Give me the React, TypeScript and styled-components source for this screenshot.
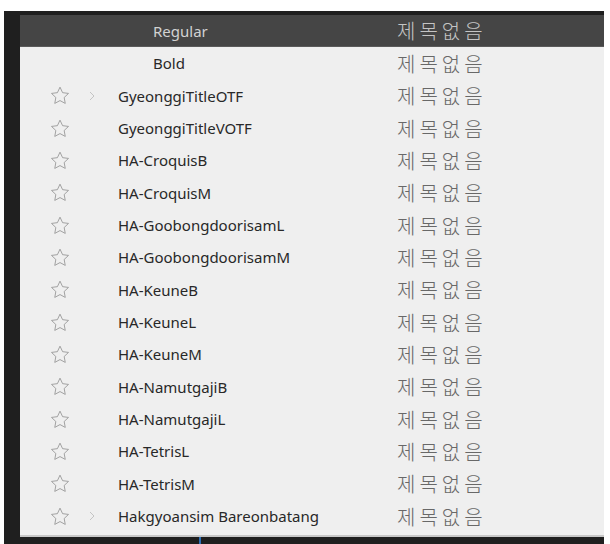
import React from "react";
import styled, { createGlobalStyle } from "styled-components";

const Global = createGlobalStyle`
  html, body { margin: 0; padding: 0; background: #ffffff; }
  body { width: 610px; height: 544px; overflow: hidden; }
`;

const Frame = styled.div`
  margin: 11px 0 0 4px;
  width: 600px;
  height: 533px;
  background: #1f1f1f;
  padding: 4px 0 0 16px;
  box-sizing: border-box;
  display: flex;
  flex-direction: column;
`;

const Panel = styled.div`
  width: 584px;
  background: #efefef;
  padding-bottom: 3px;
  border-bottom: 2px solid #c8c8c8;
  display: flex;
  flex-direction: column;
`;

const BottomStrip = styled.div`
  flex: 1;
  display: flex;
  padding-left: 179px;
`;

const BlueMark = styled.div`
  width: 2px;
  background: #2d6fb8;
`;

const Row = styled.div<{ $active?: boolean }>`
  height: 32.33px;
  box-sizing: border-box;
  display: grid;
  grid-template-columns: 30px 20px 48px 279px 1fr;
  align-items: center;
  background: ${(p) => (p.$active ? "#454545" : "transparent")};
  border-bottom: ${(p) => (p.$active ? "1px solid #5a5a5a" : "none")};
`;

const StarCell = styled.div`
  grid-column: 2;
  display: flex;
  align-items: center;
  justify-content: center;
  height: 20px;
`;

const ChevronCell = styled.div`
  grid-column: 3;
  display: flex;
  align-items: center;
  padding-left: 19px;
`;

const Name = styled.div<{ $active?: boolean; $sub?: boolean }>`
  grid-column: 4;
  padding-left: ${(p) => (p.$sub ? "35px" : "0")};
  font-family: "Noto Sans", "Open Sans", sans-serif;
  font-size: 15px;
  font-weight: 400;
  color: ${(p) => (p.$active ? "#d2d2d2" : "#282828")};
  white-space: nowrap;
`;

const Sample = styled.div<{ $active?: boolean }>`
  grid-column: 5;
  font-family: "Noto Sans CJK KR", sans-serif;
  font-size: 20px;
  font-weight: 300;
  letter-spacing: 4px;
  color: ${(p) => (p.$active ? "#c4c4c4" : "#686868")};
  white-space: nowrap;
`;

const Star = () => (
  <svg width="22" height="21" viewBox="0 0 24 23" fill="none">
    <path
      d="M12 1.5l3.1 6.6 7.1.9-5.2 4.9 1.3 7.1L12 17.6l-6.3 3.4 1.3-7.1L1.8 9l7.1-.9z"
      stroke="#929292"
      strokeWidth="1"
      strokeLinejoin="round"
    />
  </svg>
);

const Chevron = () => (
  <svg width="6" height="10" viewBox="0 0 6 10" fill="none">
    <path d="M1 1l4 4-4 4" stroke="#c4c4c4" strokeWidth="1" />
  </svg>
);

type Item = { name: string; sub?: boolean; active?: boolean; star?: boolean; chevron?: boolean };

const items: Item[] = [
  { name: "Regular", sub: true, active: true },
  { name: "Bold", sub: true },
  { name: "GyeonggiTitleOTF", star: true, chevron: true },
  { name: "GyeonggiTitleVOTF", star: true },
  { name: "HA-CroquisB", star: true },
  { name: "HA-CroquisM", star: true },
  { name: "HA-GoobongdoorisamL", star: true },
  { name: "HA-GoobongdoorisamM", star: true },
  { name: "HA-KeuneB", star: true },
  { name: "HA-KeuneL", star: true },
  { name: "HA-KeuneM", star: true },
  { name: "HA-NamutgajiB", star: true },
  { name: "HA-NamutgajiL", star: true },
  { name: "HA-TetrisL", star: true },
  { name: "HA-TetrisM", star: true },
  { name: "Hakgyoansim Bareonbatang", star: true, chevron: true },
];

export default function App() {
  return (
    <>
      <Global />
      <Frame>
        <Panel>
          {items.map((it) => (
            <Row key={it.name} $active={it.active}>
              {it.star && (
                <StarCell>
                  <Star />
                </StarCell>
              )}
              {it.chevron && (
                <ChevronCell>
                  <Chevron />
                </ChevronCell>
              )}
              <Name $active={it.active} $sub={it.sub}>
                {it.name}
              </Name>
              <Sample $active={it.active}>제목없음</Sample>
            </Row>
          ))}
        </Panel>
        <BottomStrip>
          <BlueMark />
        </BottomStrip>
      </Frame>
    </>
  );
}
